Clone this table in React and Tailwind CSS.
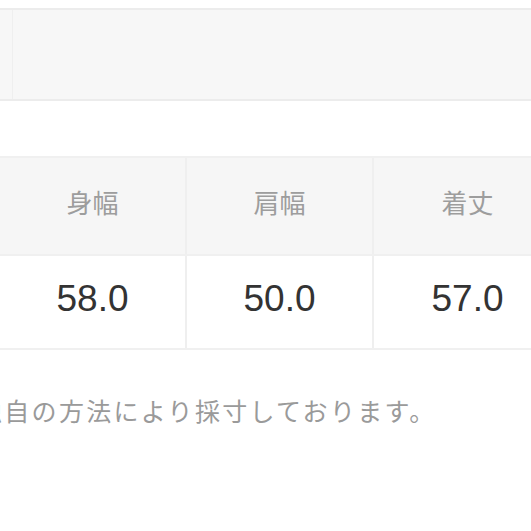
const cols = [
  { label: "身幅", value: "58.0" },
  { label: "肩幅", value: "50.0" },
  { label: "着丈", value: "57.0" },
];

const App = () => {
  return (
    <div className="w-[531px] h-[531px] overflow-hidden bg-white pt-[8px] font-['Noto_Sans_CJK_JP',sans-serif]">
      <div className="h-[93px] border-y-2 border-[#ececec] bg-[#f7f7f7] flex">
        <div className="w-[13px] border-r border-[#efefef]"></div>
      </div>

      <div className="mt-[55px] w-[562px]">
        <div className="flex h-[100px] border-y-2 border-[#f0f0f0] bg-[#f6f6f6]">
          {cols.map((c, i) => (
            <div
              key={c.label}
              className={
                "w-[187px] shrink-0 flex items-center justify-center pb-[10px] text-[26px] text-[#9d9d9d] " +
                (i < 2 ? "border-r-2 border-[#efefef]" : "")
              }
            >
              {c.label}
            </div>
          ))}
        </div>
        <div className="flex h-[94px] border-b-2 border-[#f0f0f0] bg-white">
          {cols.map((c, i) => (
            <div
              key={c.value}
              className={
                "w-[187px] shrink-0 flex items-center justify-center pb-[6px] text-[37px] text-[#333] font-['Liberation_Sans',Arial,sans-serif] " +
                (i < 2 ? "border-r-2 border-[#efefef]" : "")
              }
            >
              {c.value}
            </div>
          ))}
        </div>
      </div>

      <p className="mt-[42px] ml-[-23px] whitespace-nowrap text-[25px] leading-[36px] tracking-[2.3px] text-[#9a9a9a]">
        独自の方法により採寸しております。
      </p>
    </div>
  );
};

export default App;
